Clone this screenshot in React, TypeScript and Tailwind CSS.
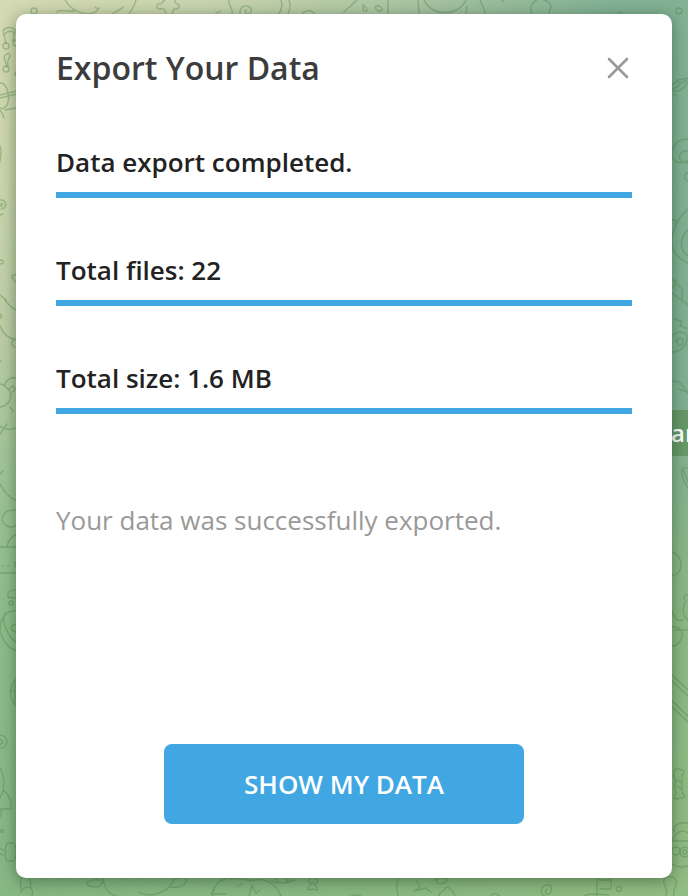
const stats = ["Data export completed.", "Total files: 22", "Total size: 1.6 MB"];

function Wallpaper() {
  return (
    <div className="absolute inset-0 bg-[linear-gradient(180deg,#82b194_0%,#80b093_45%,#8bb886_65%,#91bc82_100%)]">
      <div className="absolute inset-0 bg-[linear-gradient(180deg,#d5dab3_0%,#cad5ad_22%,#bccda4_38%,#9fc397_53%,#8ebd8a_68%,#86b784_100%)] [mask-image:linear-gradient(90deg,black_0%,rgba(0,0,0,0.85)_30%,rgba(0,0,0,0.55)_55%,transparent_90%)]" />
      <svg className="absolute inset-0" width="688" height="896" viewBox="0 0 688 896" fill="none" stroke="#4e8449" strokeOpacity=".38" strokeWidth="1.4" strokeLinecap="round" strokeLinejoin="round">
        {/* Upper edge */}
        <g>
          <circle cx="34" cy="11" r="3" />
          <path d="M57 12c2-3 6-1 11-1h7M65 0c4 7 11 13 22 14 5 0 10-2 12-6M95 7l3 2M111 15c5-5 9-4 12-8M136 0c-1 6-5 10-7 14M165 0c-3 1-2 4-5 4-4-1-4 6 0 5 3-1 5 0 6 5M175 0c-1 5 3 3 4 5s-2 5-5 4l-2 5M229 0c-2 5 5 8 3 14M281 0c2 6 0 10-2 14M289 0c2 6 1 10-1 14M215 15c2-4 4-2 5-4M240 14c-1-12 14-9 11-2-2 4-8 1-5-2" />
          <path d="M302 14c4-5 10-4 13 0M344 12l13-12M363 5c4 3 6 7 1 6-2-1-1-4-1-6zM376 6c4-1 7 3 6 4-3 3-8-1-6-4M388 0v14M418 0l1 14M424 0c8 17 34 17 42 0M467 6l-1 8M480 0c2 4 4 8 5 14M502 1l3-2M532 14c-4-8 2-13 7-15 5 0 12 4 12 7l-2 8M619 15c-2-4 4-4 3-1" />
          <circle cx="679" cy="11" r="3" />
        </g>
        {/* Left edge */}
        <g>
          <path d="M6 43L3 31c2-4 9-5 12-1l-2 11M5 34c2-3 7-4 9-1" />
          <circle cx="6" cy="46" r="3" /><circle cx="16" cy="43" r="3" />
          <path d="M7 67l-3-10c1-3 6-5 6-2 0 4-4 5-2 10" />
          <circle cx="6" cy="69" r="3" /><circle cx="17" cy="74" r="2" />
          <path d="M0 83c6-1 10 11 8 19-2 7-5 7-8 6M0 95l17-4M0 98l17-4M0 110c2 2 3 5 4 8M5 110l11-2M0 146c2 6 1 12-1 19" />
          <path d="M0 200c8-1 7 10 1 9M3 205c-1-4-4 1-1 2M0 215l3-1M17 274l-5 2c-1 2 2 4 5 7M0 295l6 5" />
          <circle cx="1" cy="262" r="2" />
          <path d="M5 300c4 6 9 9 12 11M0 318c3-1 2-2 0-4M0 326c3 7 7 12 14 13M17 339c-7 2-7 5-2 8M0 361h1M4 386c3-8 8-9 13-8M0 384c4 0 10 6 11 10 0 8-5 12-11 13M9 389l4-3c3 2 2 5-1 6M10 407l3 4M0 434l7-10M0 426c5 4 10 4 16 2M0 474l3-3M0 484c4 8 10 14 17 17M16 510c-14-1-18 11-9 16 4 2 7 1 9-1M7 547c1-6 5-11 10-13M0 547h17M2 566h1M8 566h1M15 562v5M0 573h17M17 590c-8-1-11 4-8 8 3-3 5 3 8-1" />
          <circle cx="11" cy="603" r="2" />
          <path d="M17 611c-14-2-19 13-16 23 3 9 9 15 16 17M5 613c-4 9 3 24 12 30M16 624l-5 2 1 4 4 2M17 678c-9 7-8 22 0 29M15 680v25M13 690l4 5M0 735c10 1 8 13 1 13M0 740c4 0 3 5 0 4M0 768c6 10 4 23 0 30M3 790c6 4 9 12 8 19H0M0 810c2 0 2 5 0 7M7 843h6c5 4 4 15 0 18H7c-3-3-2-14 0-18zM0 848l3 2M0 854l3 1" />
          <circle cx="2" cy="831" r="1.5" />
        </g>
        {/* Right edge */}
        <g>
          <path d="M672 85l6-5 1 4 8-4M678 80l10-2M673 91c8 1 10-2 15-9M672 89l7-3M673 94l3 2M688 139c-10 0-17 7-16 17 2 7 8 8 16 5M688 151c-4-1-11 3-8 8 2 4 5 3 8 4M688 173c-4 0-5 7 0 8M672 220h4l-1 6M688 209c-9 8-16 20-16 33 0 10 7 17 16 21M688 230c-7 6-9 16-3 24l3 1M672 279l10 10v11M676 280l-3 8M672 293l16 12" />
          <path d="M674 319c3-1 5 5 8 1l-2 6c4 0 4 3 7 2M673 336c4-6 14-5 14 2 0 8-7 14-14 14M676 342c1-5 8-5 7 0s-7 4-5 0M672 381c8-1 12 4 15 12M679 389l9 3M687 468c-9-3-5 12 1 20M683 469l5 13M672 552c13 4 11 24 0 23M684 599c-1-3 1-5 4-4" />
          <path d="M672 611c2 7 6 11 11 9M686 600c-5 9-3 16 2 20M672 627c9-1 13 7 8 14-2 3-5 5-8 5M688 630h-14M672 675l16 15M672 681l16 15M672 701l16 15M672 707l16 15M675 770c1-3 4-2 5 0 4-2 5 3 2 5v18c3 1 4 5 0 5l-7 1c-2-2 1-4 1-6-2-4-2-10 0-13-3-1-3-7-1-10zM678 780l4 3M677 786l4 3M674 832c-2-8 7-10 14-9M673 840c2-10 12-10 15-7M672 841h16M672 864c6 4 11 3 16 2" />
          <circle cx="676" cy="851" r="4" /><circle cx="685" cy="852" r="5" />
          <circle cx="685" cy="852" r="2" /><circle cx="679" cy="452" r="2" />
        </g>
        {/* Lower edge */}
        <g>
          <path d="M32 896c3-11-8-11-11-4 0-7-3-15 5-16 5 0 4 5 5 12M102 878c2 9-6 11-14 7-5-2 3-6 11-5M103 879c2 12 9 17 17 18M139 892c11 7 31 0 35-13M174 879c9-3 14-2 12 3-3 5-11 6-16 5M213 896c1-12 6-17 18-18l19 2M214 888l-3 6h15M231 880l4-5M237 887l5-3M249 896l3-11 4 8 4-3M250 881c17-5 27 5 31 15M271 881c8 3 17 2 24-1M276 879l3 3M286 879l2 3M310 878c-4 6 1 5 3 5-5 3-9 9 0 6 6 3 6 0 1-5 5-1 5-5 1-6M351 896c5-2 8-1 10 0" />
          <path d="M398 879c-2 6-1 11 0 17M416 880l4 7-6 4 12-3 5 4M434 880c9-5 18 0 10 3-5 2-9 0-7-3M439 896c0-6 5-3 6-7s7-1 10 7M491 896c2-4 6-3 8 0M545 896c-6-2-4-12 3-11 5 0 4 7 1 9-3 2-5-3-2-5M597 878v18M599 880h12v9h-11M584 896c5-3 12-2 25-1M666 896c3-9-4-10-2-16 2-5 9-4 12 0 2 5-4 9-2 16" />
          <circle cx="619" cy="889" r="2.5" />
        </g>
      </svg>
    </div>
  );
}

export default function App() {
  return (
    <main className="relative isolate h-[896px] w-[688px] overflow-hidden px-4 pt-[14px] font-['Open_Sans',sans-serif]">
      <Wallpaper />
      <div className="absolute top-[410px] left-[620px] flex h-[46px] w-[68px] items-center overflow-hidden bg-[#649665]/90 pl-[51px] text-2xl font-semibold text-white">an</div>
      <section className="relative flex h-[864px] flex-col rounded-[10px] bg-white px-10 shadow-[0_3px_16px_rgba(20,50,25,0.48)]">
        <header className="flex h-[108px] items-center justify-between">
          <h1 className="text-[32px] leading-[44px] font-semibold text-[#3c3c3c]">Export Your Data</h1>
          <button aria-label="Close" className="mr-[3px]">
            <svg width="22" height="22" viewBox="0 0 22 22" stroke="#999" strokeWidth="2.6" strokeLinecap="round"><path d="M2 2l18 18M20 2L2 20" /></svg>
          </button>
        </header>
        <div className="flex flex-col">
          {stats.map((label) => (
            <div key={label} className="flex h-[108px] flex-col pt-[21px]">
              <p className="h-[49px] text-[26px] leading-[38px] font-semibold text-[#222]">{label}</p>
              <div className="h-1.5 shrink-0 bg-[#40a7e3]" />
            </div>
          ))}
        </div>
        <p className="mt-[55px] text-[26px] leading-[38px] text-[#999]">Your data was successfully exported.</p>
        <button className="mt-auto mb-[54px] h-20 w-[360px] self-center rounded-lg bg-[#40a7e3] text-[26px] font-semibold text-white">SHOW MY DATA</button>
      </section>
    </main>
  );
}
